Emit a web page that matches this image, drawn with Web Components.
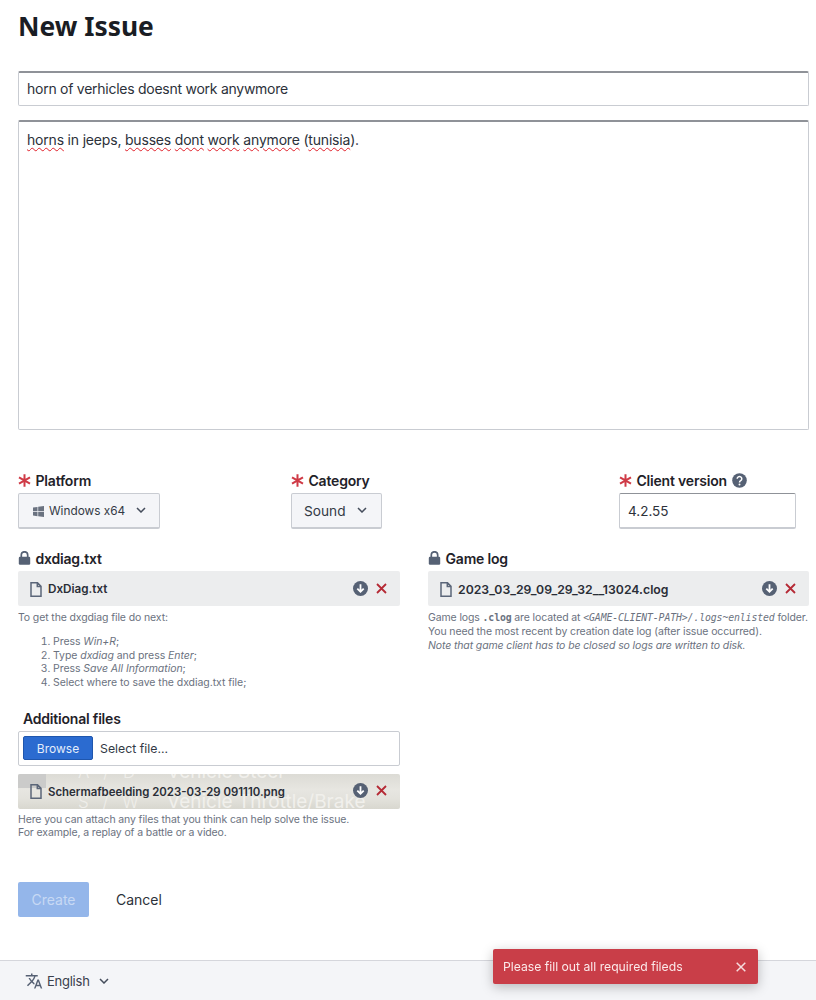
<!DOCTYPE html>
<html>
<head>
<meta charset="utf-8">
<title>New Issue</title>
<style>
  html, body { margin: 0; padding: 0; background: #fff; }
  body { font-family: Inter, "Noto Sans", sans-serif; color: #1f2229; }
</style>
</head>
<body>
<issue-page>
  <issue-form></issue-form>
  <page-footer></page-footer>
</issue-page>
<error-toast>Please fill out all required fileds</error-toast>

<script>
const ICONS = {
  file: '<svg width="12" height="15" viewBox="0 0 12 15"><path d="M1 .8h6.500L11 4.300v9.900H1z M7.300 1v3.400H11" fill="none" stroke="#5b6679" stroke-width="1.500"/></svg>',
  download: '<svg width="15" height="15" viewBox="0 0 15 15"><circle cx="7.500" cy="7.500" r="7.500" fill="#566174"/><path d="M7.500 3.300v7.400M4.300 7.600l3.200 3.200 3.200-3.200" fill="none" stroke="#fff" stroke-width="1.800"/></svg>',
  remove: '<svg width="11" height="11" viewBox="0 0 11 11"><path d="M1 1l9 9M10 1l-9 9" stroke="#b52a35" stroke-width="1.800" fill="none"/></svg>',
  lock: '<svg width="13" height="14" viewBox="0 0 13 14"><path d="M3.300 6V4a3.200 3.200 0 0 1 6.400 0v2" fill="none" stroke="#566174" stroke-width="1.700"/><rect x=".8" y="5.800" width="11.400" height="8" rx="1.200" fill="#566174"/></svg>',
  star: '<svg width="13" height="13" viewBox="0 0 13 13"><path d="M6.500 .3v12.400M1 3.300l11 6.400M12 3.300L1 9.700" stroke="#cf3a46" stroke-width="2" fill="none"/></svg>',
  chevron: '<svg width="10" height="6" viewBox="0 0 10 6"><path d="M1 1l4 4 4-4" fill="none" stroke="#454d5c" stroke-width="1.500"/></svg>',
  windows: '<svg width="11" height="11" viewBox="0 0 11 11"><path d="M0 1.600l4.500-.7v4.300H0zM5.200.8L11 0v5.200H5.200zM0 5.900h4.500v4.300L0 9.500zM5.200 5.900H11V11l-5.800-.8z" fill="#6a7280"/></svg>',
  help: '<svg width="15" height="15" viewBox="0 0 15 15"><circle cx="7.500" cy="7.500" r="7.300" fill="#566174"/><path d="M5.200 5.800a2.300 2.200 0 1 1 3.500 1.900c-.8.500-1.200.9-1.200 1.800" fill="none" stroke="#fff" stroke-width="1.500"/><circle cx="7.500" cy="11.500" r="1" fill="#fff"/></svg>',
  lang: '<svg width="18" height="18" viewBox="0 0 24 24"><path d="M12.870 15.070l-2.540-2.510.03-.03A17.500 17.500 0 0 0 14.070 6H17V4h-7V2H8v2H1v2h11.170C11.500 7.920 10.440 9.750 9 11.350 8.070 10.320 7.300 9.190 6.690 8h-2c.73 1.630 1.730 3.170 2.980 4.560l-5.090 5.020L4 19l5-5 3.110 3.110.76-2.040zM18.500 10h-2L12 22h2l1.120-3h4.750L21 22h2l-4.500-12zm-2.620 7l1.620-4.330L19.120 17h-3.240z" fill="#566174"/></svg>'
};

class IssuePage extends HTMLElement {
  connectedCallback() {
    this.attachShadow({ mode: 'open' });
    this.shadowRoot.innerHTML = `
      <style>
        :host { display: flex; flex-direction: column; height: 1000px; overflow: hidden; }
        ::slotted(issue-form) { flex: 1; }
      </style>
      <slot></slot>`;
  }
}

class RequiredLabel extends HTMLElement {
  connectedCallback() {
    const icon = this.getAttribute('icon');
    this.attachShadow({ mode: 'open' });
    this.shadowRoot.innerHTML = `
      <style>
        :host { display: flex; align-items: center; gap: 4.500px; height: 16px; font-size: 14px; font-weight: 600; color: #1f2229; letter-spacing: -.2px; }
        span { display: flex; }
      </style>
      ${icon ? `<span>${ICONS[icon]}</span>` : ''}<slot></slot>`;
  }
}

class SelectBox extends HTMLElement {
  connectedCallback() {
    this.attachShadow({ mode: 'open' });
    this.shadowRoot.innerHTML = `
      <style>
        :host { display: inline-flex; align-items: center; height: 36px; box-sizing: border-box; padding: 1px 14px 0 12px; gap: 11px; background: #f4f5f8; border: 1px solid #c9ccd2; border-bottom-width: 2px; border-radius: 2px; font-size: 13.700px; color: #333a45; }
        :host([windows]) { padding-left: 14px; padding-right: 13px; gap: 5px; font-size: 11.800px; }
        :host([windows]) .chev { margin-left: 6px; }
        .ic { display: flex; }
        .chev { display: flex; margin-top: -2px; }
      </style>
      ${this.hasAttribute('windows') ? `<span class="ic">${ICONS.windows}</span>` : ''}
      <slot></slot><span class="chev">${ICONS.chevron}</span>`;
  }
}

class FileRow extends HTMLElement {
  connectedCallback() {
    const shot = this.hasAttribute('shot');
    this.attachShadow({ mode: 'open' });
    this.shadowRoot.innerHTML = `
      <style>
        :host { display: block; position: relative; overflow: hidden; height: 35px; border-radius: 2px; background: #ecedee; font-weight: 600; color: #2a2e37; }
        :host([shot]) { background: linear-gradient(180deg, #dcdbd5 0, #e7e6e1 45%, #e3e2dc 70%, #d8d7cf 100%); }
        .patch { position: absolute; left: 0; top: 0; width: 28px; height: 14px; background: #cbcbca; }
        .bg { position: absolute; left: 149px; top: -17px; font-size: 19px; line-height: 30px; font-weight: 400; color: #f1f0ec; white-space: nowrap; }
        .keys { position: absolute; left: 60px; top: -17px; font-size: 17px; line-height: 30px; font-weight: 300; word-spacing: 9px; color: #efeeea; white-space: nowrap; }
        .row { position: relative; box-sizing: border-box; display: flex; align-items: center; height: 100%; padding: 1px 13px 0 12px; }
        .name { margin-left: 6px; flex: 1; white-space: nowrap; }
        .dl { display: flex; margin-right: 8px; margin-top: -2px; }
        .rm { display: flex; margin-top: -2px; }
        svg { display: block; }
        .doc { display: flex; }
      </style>
      ${shot ? '<div class="patch"></div><div class="keys">A / D<br>S / W</div><div class="bg">Vehicle Steer<br>Vehicle Throttle/Brake</div>' : ''}
      <div class="row">
        <span class="doc">${ICONS.file}</span>
        <span class="name"><slot></slot></span>
        <span class="dl">${ICONS.download}</span>
        <span class="rm">${ICONS.remove}</span>
      </div>`;
  }
}

class HelpText extends HTMLElement {
  connectedCallback() {
    this.attachShadow({ mode: 'open' });
    this.shadowRoot.innerHTML = `
      <style>
        :host { display: block; font-size: 10.500px; line-height: 14px; color: #6b7280; letter-spacing: -.12px; white-space: nowrap; }
      </style>
      <slot></slot>`;
  }
}

class IssueForm extends HTMLElement {
  connectedCallback() {
    this.attachShadow({ mode: 'open' });
    this.shadowRoot.innerHTML = `
      <style>
        :host { display: block; padding: 7px 7px 0 18px; }
        h1 { margin: 0; font: 700 26.400px/38px "Noto Sans", sans-serif; color: #1a1d24; }
        .box { box-sizing: border-box; border: 1px solid #c9ccd2; border-top: 2px solid #8f9298; border-radius: 2px; font-size: 14px; color: #2c313a; background: #fff; }
        .title { height: 35px; margin-top: 26px; padding: 0 8px 1px; display: flex; align-items: center; letter-spacing: -.26px; }
        .body { height: 310px; margin-top: 14px; padding: 10px 8px; line-height: 16px; letter-spacing: -.19px; }
        .body span { text-decoration: underline wavy #e0202a 1px; text-underline-offset: 2px; }
        .meta { display: flex; margin-top: 42px; }
        .meta > div { display: flex; flex-direction: column; align-items: flex-start; gap: 5px; }
        .m1 { width: 273px; } .m2 { width: 328px; }
        .version { width: 177px; height: 36px; padding: 1px 8px 0; display: flex; align-items: center; font-size: 13.500px; border-top-width: 1px; border-bottom-width: 2px; }
        .cols { display: grid; grid-template-columns: 382px 381px; column-gap: 28px; margin-top: 21px; }
        .cols required-label { margin-bottom: 5px; }
        .cols help-text { margin-top: 5px; }
        ol { margin: 10px 0 0; padding: 0 0 0 35px; line-height: 13.700px; letter-spacing: -.05px; }
        code { font: 700 9.800px "DejaVu Sans Mono", monospace; }
        .mono { font: italic 9.800px "DejaVu Sans Mono", monospace; letter-spacing: -.1px; }
        .extra { width: 382px; margin-top: 21px; }
        .extra required-label { margin: 0 0 4px 5px; }
        .picker { box-sizing: border-box; height: 35px; border: 1px solid #c9ccd2; border-radius: 2px; display: flex; align-items: center; padding: 0 4px; gap: 7px; font-size: 12.300px; color: #333a45; }
        .browse { width: 70px; height: 24px; display: flex; align-items: center; justify-content: center; background: #2b6bd0; border: 1px solid #1f56ad; border-radius: 2px; box-sizing: border-box; color: #e4edfb; font-size: 12px; }
        .extra file-row { margin-top: 8px; }
        .extra help-text { margin-top: 4px; line-height: 13.500px; }
        .actions { display: flex; align-items: center; margin-top: 42px; gap: 27px; }
        .create { width: 71px; height: 35px; display: flex; align-items: center; justify-content: center; background: #94b6ea; border-radius: 2px; font-size: 14px; color: #c7d9f4; }
        .cancel { font-size: 14px; color: #2c313a; }
      </style>
      <h1>New Issue</h1>
      <div class="box title">horn of verhicles doesnt work anywmore</div>
      <div class="box body"><span>horns</span> in jeeps, <span>busses</span> <span>dont</span> <span>work</span> <span>anymore</span> (<span>tunisia</span>).</div>
      <div class="meta">
        <div class="m1">
          <required-label icon="star">Platform</required-label>
          <select-box windows>Windows x64</select-box>
        </div>
        <div class="m2">
          <required-label icon="star">Category</required-label>
          <select-box>Sound</select-box>
        </div>
        <div>
          <required-label icon="star">Client version <span style="display:flex;margin-left:1px">${ICONS.help}</span></required-label>
          <div class="box version">4.2.55</div>
        </div>
      </div>
      <div class="cols">
        <div>
          <required-label icon="lock">dxdiag.txt</required-label>
          <file-row style="font-size:11.700px">DxDiag.txt</file-row>
          <help-text>
            To get the dxgdiag file do next:
            <ol>
              <li>Press <i>Win+R</i>;</li>
              <li>Type <i>dxdiag</i> and press <i>Enter</i>;</li>
              <li>Press <i>Save All Information</i>;</li>
              <li>Select where to save the dxdiag.txt file;</li>
            </ol>
          </help-text>
        </div>
        <div>
          <required-label icon="lock">Game log</required-label>
          <file-row style="font-size:12.250px">2023_03_29_09_29_32__13024.clog</file-row>
          <help-text>
            Game logs <code>.clog</code> are located at <span class="mono">&lt;GAME-CLIENT-PATH&gt;/.logs~enlisted</span> folder.<br>
            You need the most recent by creation date log (after issue occurred).<br>
            <i>Note that game client has to be closed so logs are written to disk.</i>
          </help-text>
        </div>
      </div>
      <div class="extra">
        <required-label>Additional files</required-label>
        <div class="picker"><div class="browse">Browse</div>Select file...</div>
        <file-row shot style="font-size:11.400px">Schermafbeelding 2023-03-29 091110.png</file-row>
        <help-text>Here you can attach any files that you think can help solve the issue.<br>For example, a replay of a battle or a video.</help-text>
      </div>
      <div class="actions">
        <div class="create">Create</div>
        <div class="cancel">Cancel</div>
      </div>`;
  }
}

class PageFooter extends HTMLElement {
  connectedCallback() {
    this.attachShadow({ mode: 'open' });
    this.shadowRoot.innerHTML = `
      <style>
        :host { display: flex; align-items: center; height: 39px; background: #f4f5f8; border-top: 1px solid #d5d6dc; padding-left: 25px; gap: 4px; font-size: 13px; letter-spacing: -.25px; color: #3a404c; }
        span { display: flex; }
      </style>
      <span>${ICONS.lang}</span>English<span style="margin-left:5px">${ICONS.chevron}</span>`;
  }
}

// sits over the footer, bottom right of the window
class ErrorToast extends HTMLElement {
  connectedCallback() {
    this.attachShadow({ mode: 'open' });
    this.shadowRoot.innerHTML = `
      <style>
        :host { position: fixed; left: 493px; top: 949px; width: 265px; height: 35px; box-sizing: border-box; display: flex; align-items: center; justify-content: space-between; padding: 0 12px 0 10px; background: #c93e48; border-radius: 2px; box-shadow: 0 3px 12px rgba(0,0,0,.25); color: #fbe9ea; font-size: 12.200px; }
        svg { display: block; }
      </style>
      <slot></slot>
      <svg width="10" height="10" viewBox="0 0 10 10"><path d="M.7.7l8.600 8.600M9.300.7L.7 9.300" stroke="#f6dcde" stroke-width="1.500" fill="none"/></svg>`;
  }
}

customElements.define('issue-page', IssuePage);
customElements.define('required-label', RequiredLabel);
customElements.define('select-box', SelectBox);
customElements.define('file-row', FileRow);
customElements.define('help-text', HelpText);
customElements.define('issue-form', IssueForm);
customElements.define('page-footer', PageFooter);
customElements.define('error-toast', ErrorToast);
</script>
</body>
</html>
